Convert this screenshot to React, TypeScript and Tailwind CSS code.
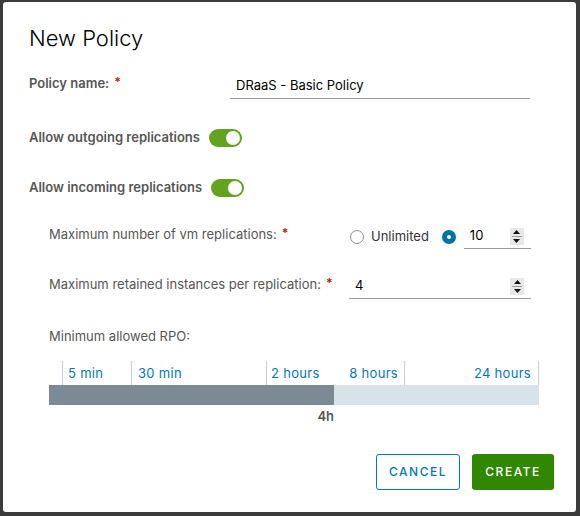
import React from "react";

const font = { fontFamily: "Inter, Lato, sans-serif" };

function Toggle() {
  return (
    <div className="relative h-[18px] w-[33px] rounded-full bg-[#62a420]">
      <div className="absolute right-[2px] top-[2px] h-[14px] w-[14px] rounded-full bg-white" />
    </div>
  );
}

function Req() {
  return <span className="ml-[5px] text-[12px] font-bold text-[#c92100] relative -top-[2px]">*</span>;
}

function Spinner() {
  return (
    <div className="flex h-[17px] w-[14px] flex-col items-center justify-center gap-[2px] bg-[#e8e8e8]">
      <svg width="7" height="4" viewBox="0 0 7 4"><path d="M0 4 L3.5 0 L7 4 Z" fill="#111" /></svg>
      <div className="h-px w-[10px] bg-[#9a9a9a]" />
      <svg width="7" height="4" viewBox="0 0 7 4"><path d="M0 0 L3.5 4 L7 0 Z" fill="#111" /></svg>
    </div>
  );
}

export default function App() {
  const ticks = [13, 82, 217, 355, 489];
  return (
    <div className="h-[516px] w-[580px] bg-[#3b3b3b] pl-[3px] pt-[2px]" style={font}>
      <div className="flex h-[510px] w-[573px] flex-col rounded-[3px] bg-white px-[26px] pt-[22px]">
        <h1 className="text-[22px] font-light leading-[28px] text-black">New Policy</h1>

        <div className="mt-[21px] flex h-[26px] items-start">
          <div className="w-[201px] text-[13px] font-semibold leading-[20px] text-[#565656]">
            Policy name:<Req />
          </div>
          <div className="flex h-[26px] w-[300px] items-center border-b border-[#9a9a9a] px-[6px] text-[13px] text-black">
            DRaaS - Basic Policy
          </div>
        </div>

        <div className="mt-[26px] flex h-[26px] items-center gap-[9px]">
          <span className="text-[13px] font-semibold text-[#565656]">Allow outgoing replications</span>
          <Toggle />
        </div>

        <div className="mt-[24px] flex h-[26px] items-center gap-[9px]">
          <span className="text-[13px] font-semibold text-[#565656]">Allow incoming replications</span>
          <Toggle />
        </div>

        <div className="mt-[23px] flex h-[26px] items-start pl-[20px]">
          <div className="w-[300px] text-[13px] leading-[20px] text-[#565656]">
            Maximum number of vm replications:<Req />
          </div>
          <div className="flex h-[25px] items-center">
            <div className="ml-[1px] h-[14px] w-[14px] rounded-full border border-[#8c8c8c] bg-white" />
            <span className="ml-[7px] text-[13px] text-[#333]">Unlimited</span>
            <div className="ml-[13px] flex h-[14px] w-[14px] items-center justify-center rounded-full bg-[#0072a3]">
              <div className="h-[4px] w-[4px] rounded-full bg-white" />
            </div>
            <div className="ml-[8px] flex h-[25px] w-[67px] items-center justify-between border-b border-[#9a9a9a] pl-[6px] pr-[7px]">
              <span className="text-[13px] text-black">10</span>
              <Spinner />
            </div>
          </div>
        </div>

        <div className="mt-[24px] flex h-[26px] items-start pl-[20px]">
          <div className="w-[300px] text-[13px] leading-[20px] text-[#565656]">
            Maximum retained instances per replication:<Req />
          </div>
          <div className="flex h-[25px] w-[182px] items-center justify-between border-b border-[#9a9a9a] pl-[6px] pr-[7px]">
            <span className="text-[13px] text-black">4</span>
            <Spinner />
          </div>
        </div>

        <div className="mt-[26px] pl-[20px] text-[13px] leading-[20px] text-[#565656]">Minimum allowed RPO:</div>

        <div className="mt-[15px] ml-[20px] w-[490px]">
          <div className="relative h-[24px] text-[13px] leading-[18px] tracking-[0.3px] text-[#0079b8]">
            {ticks.map((t) => (
              <div key={t} className="absolute top-0 h-[24px] w-px bg-[#c5ced4]" style={{ left: t }} />
            ))}
            <span className="absolute left-[19px] top-[3px]">5 min</span>
            <span className="absolute left-[89px] top-[3px]">30 min</span>
            <span className="absolute left-[222px] top-[3px]">2 hours</span>
            <span className="absolute right-[141px] top-[3px]">8 hours</span>
            <span className="absolute right-[8px] top-[3px]">24 hours</span>
          </div>
          <div className="flex h-[20px]">
            <div className="h-full w-[285px] bg-[#7b8a94]" />
            <div className="h-full flex-1 bg-[#d8e3e9]" />
          </div>
          <div className="mt-[3px] w-[285px] text-right text-[13px] font-semibold leading-[16px] text-[#565656]">4h</div>
        </div>

        <div className="mt-[30px] mr-[-4px] flex justify-end gap-[12px]">
          <button className="h-[36px] w-[84px] rounded-[3px] border border-[#0079b8] bg-white text-[12px] font-medium tracking-[1.5px] text-[#0079b8]">
            CANCEL
          </button>
          <button className="h-[36px] w-[82px] rounded-[3px] bg-[#318700] text-[12px] font-medium tracking-[1.5px] text-white">
            CREATE
          </button>
        </div>
      </div>
    </div>
  );
}
